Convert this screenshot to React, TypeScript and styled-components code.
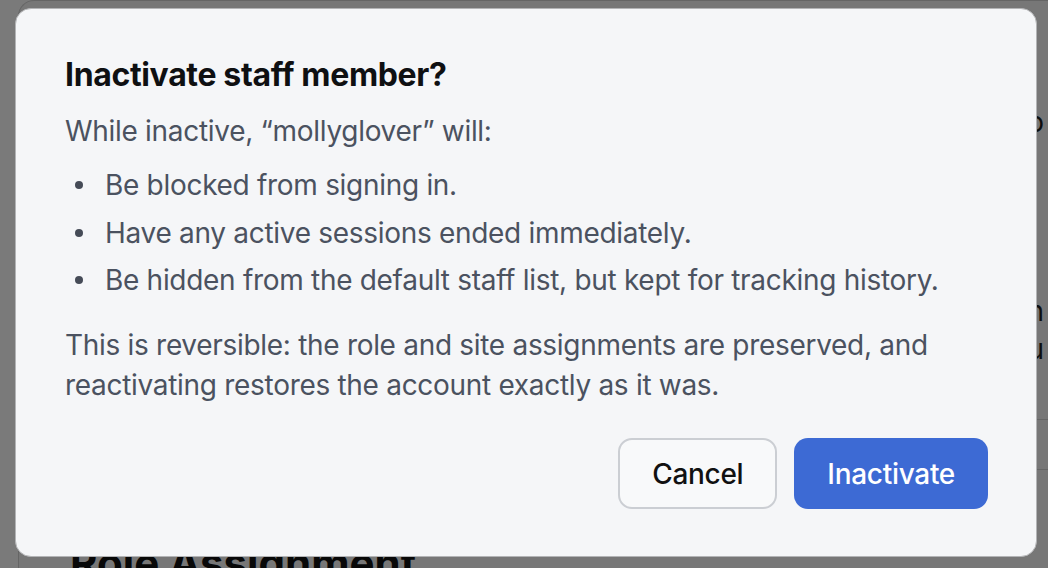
import React from 'react';
import styled, { createGlobalStyle } from 'styled-components';

const GlobalStyle = createGlobalStyle`
    html, body {
        margin: 0;
        padding: 0;
        height: 100%;
        overflow: hidden;
        background: #ffffff;
        font-family: Inter, "Noto Sans", "Liberation Sans", sans-serif;
    }
`;

// Page behind the dialog
const Underlay = styled.div`
    height: 100vh;
    padding-left: 18px;
    overflow: hidden;
    background: #ffffff;
`;

const Card = styled.section`
    width: 1120px;
    min-height: 620px;
    box-sizing: border-box;
    padding: 101px 0 0 51px;
    border-left: 1px solid #d4d4d4;
    border-top: 1px solid #d4d4d4;
    border-radius: 16px 0 0 0;
    background: #f8f8f8;
    color: #1f1f1f;
`;

const SideNote = styled.p<{ $gap?: number; $lh?: number }>`
    margin: ${p => p.$gap ?? 0}px 0 0;
    width: 974px;
    text-align: right;
    font-size: 28px;
    line-height: ${p => p.$lh ?? 40}px;
`;

const TableRow = styled.div`
    margin-top: 51px;
    height: 49px;
    border-top: 1px solid #d6d6d6;
    border-bottom: 1px solid #d6d6d6;
`;

const PageHeading = styled.h2`
    margin: 68px 0 0;
    font-size: 42px;
    line-height: 50px;
    font-weight: 700;
    color: #111111;
`;

// Dialog
const Backdrop = styled.div`
    position: fixed;
    inset: 0;
    display: flex;
    align-items: flex-start;
    justify-content: flex-start;
    padding: 8px 0 0 15px;
    background: rgba(0, 0, 0, 0.52);
`;

const Dialog = styled.div`
    width: 1022px;
    box-sizing: border-box;
    padding: 46px 48px 47px 49px;
    background: #f5f6f8;
    border: 1px solid #b3b4b6;
    border-radius: 16px;
`;

const Title = styled.h1`
    margin: 0;
    font-size: 32px;
    line-height: 40px;
    font-weight: 700;
    color: #0f1012;
    letter-spacing: -0.35px;
`;

const Text = styled.p<{ $gap: number }>`
    margin: ${p => p.$gap}px 0 0;
    font-size: 28px;
    line-height: 40px;
    letter-spacing: -0.3px;
    color: #4b5260;
`;

const List = styled.ul`
    margin: 14px 0 0;
    padding: 0;
    list-style: none;
    font-size: 28px;
    line-height: 40px;
    letter-spacing: -0.3px;
    color: #4b5260;
`;

const Item = styled.li`
    display: grid;
    grid-template-columns: 40px 1fr;

    &::before {
        content: '';
        width: 8px;
        height: 8px;
        margin: 16px 0 0 9.5px;
        border-radius: 50%;
        background: #454b57;
    }

    & + & {
        margin-top: 7.5px;
    }
`;

const Actions = styled.div`
    display: flex;
    justify-content: flex-end;
    gap: 17px;
    margin-top: 33px;
`;

const Button = styled.button<{ $primary?: boolean }>`
    box-sizing: border-box;
    height: 71px;
    padding: 0 ${p => (p.$primary ? 33 : 32)}px;
    border-radius: 14px;
    border: ${p => (p.$primary ? 'none' : '2px solid #cbced3')};
    background: ${p => (p.$primary ? '#3d6ad4' : '#f8f9fa')};
    color: ${p => (p.$primary ? '#ffffff' : '#111111')};
    font-family: inherit;
    font-size: 28px;
    font-weight: 500;
    letter-spacing: -0.3px;
    cursor: pointer;
`;

export default function App() {
    return (
        <>
            <GlobalStyle />
            <Underlay>
                <Card>
                    <SideNote>Contact info</SideNote>
                    <SideNote $gap={150} $lh={38}>
                        Sign-in and admin
                        <br />
                        menu
                    </SideNote>
                    <TableRow />
                    <PageHeading>Role Assignment</PageHeading>
                </Card>
            </Underlay>
            <Backdrop>
                <Dialog role="dialog" aria-modal="true">
                    <Title>Inactivate staff member?</Title>
                    <Text $gap={16}>While inactive, “mollyglover” will:</Text>
                    <List>
                        <Item>Be blocked from signing in.</Item>
                        <Item>Have any active sessions ended immediately.</Item>
                        <Item>Be hidden from the default staff list, but kept for tracking history.</Item>
                    </List>
                    <Text $gap={25}>
                        This is reversible: the role and site assignments are preserved, and
                        reactivating restores the account exactly as it was.
                    </Text>
                    <Actions>
                        <Button>Cancel</Button>
                        <Button $primary>Inactivate</Button>
                    </Actions>
                </Dialog>
            </Backdrop>
        </>
    );
}
